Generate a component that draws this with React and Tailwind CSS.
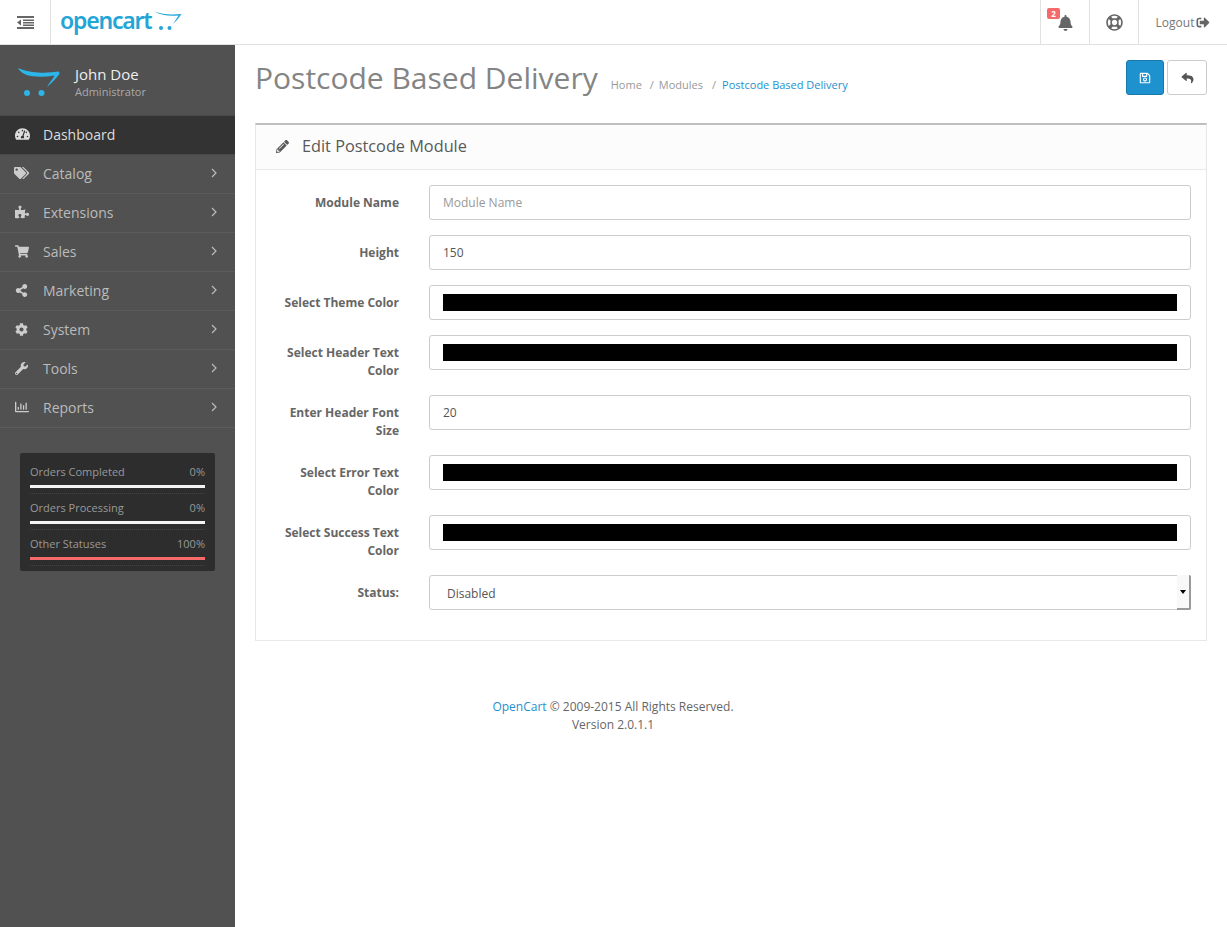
import React from 'react';
import {
  FaTachometerAlt, FaTags, FaPuzzlePiece, FaShoppingCart, FaShareAlt, FaCog, FaWrench,
  FaRegChartBar, FaBell, FaRegLifeRing, FaSignOutAlt, FaRegSave, FaReply, FaPencilAlt,
} from 'react-icons/fa';

const menu = [
  { label: 'Catalog', icon: FaTags, size: 'w-[15px] h-[14px]' },
  { label: 'Extensions', icon: FaPuzzlePiece, size: 'w-[14px] h-[14px]' },
  { label: 'Sales', icon: FaShoppingCart, size: 'w-[14px] h-[13px]' },
  { label: 'Marketing', icon: FaShareAlt, size: 'w-[13px] h-[13px]' },
  { label: 'System', icon: FaCog, size: 'w-[13px] h-[13px]' },
  { label: 'Tools', icon: FaWrench, size: 'w-[13px] h-[13px]' },
  { label: 'Reports', icon: FaRegChartBar, size: 'w-[16px] h-[14px]' },
];

const stats = [
  { label: 'Orders Completed', value: '0%', bar: 'bg-[#f3f3f3]' },
  { label: 'Orders Processing', value: '0%', bar: 'bg-[#f3f3f3]' },
  { label: 'Other Statuses', value: '100%', bar: 'bg-[#f56b6b]' },
];

function CartLogo({ className }) {
  return (
    <svg className={className} viewBox="0 0 42 28" fill="currentColor">
      <path d="M0 0C6 2.500 12 4 20 4.500C27 5 34 4.500 41 3.500L41.500 6C38 10.500 33 16 29 19C31 15 34 12 36.500 7.500C28 9 20 9 13 8C7 7 2 4 0 0z" />
      <circle cx="9" cy="25" r="3" />
      <circle cx="23.500" cy="25" r="3" />
    </svg>
  );
}

function HeaderCart() {
  return (
    <svg className="w-[28px] h-[20px] ml-[3px] -mt-[2px]" viewBox="0 0 28 20" fill="currentColor">
      <path d="M0.500 0.500C8 3.500 17 4 27.500 3C25 7 22 10 19 13C21 10 23 7 24.500 4.500C16 5.500 7 4.500 0.500 0.500z" />
      <circle cx="7" cy="17" r="2" />
      <circle cx="15.500" cy="17" r="2" />
    </svg>
  );
}

function OutdentIcon() {
  return (
    <svg className="w-[17px] h-[13px]" viewBox="0 0 17 13" fill="currentColor">
      <rect x="0" y="0" width="17" height="2" />
      <rect x="6" y="3.500" width="11" height="1.500" />
      <rect x="6" y="6" width="11" height="1.500" />
      <rect x="6" y="8.500" width="11" height="1.500" />
      <rect x="0" y="11" width="17" height="2" />
      <path d="M0 6.500L4 3.500V9.500z" />
    </svg>
  );
}

function ThinChevron() {
  return (
    <svg className="ml-auto mr-[18px] w-[6px] h-[10px]" viewBox="0 0 6 10" fill="none" stroke="currentColor" strokeWidth="1.200">
      <path d="M1 1l4 4-4 4" />
    </svg>
  );
}

function FormRow({ label, children }) {
  return (
    <div className="flex items-start">
      <label className="w-[130px] shrink-0 ml-[4px] mr-[30px] pt-[9px] text-right text-[12px] leading-[18px] font-bold text-[#666]">
        {label}
      </label>
      <div className="flex-1">{children}</div>
    </div>
  );
}

function TextField({ label, value, placeholder }) {
  return (
    <FormRow label={label}>
      <input
        type="text"
        defaultValue={value}
        placeholder={placeholder}
        className="w-full h-[35px] px-[13px] bg-white border border-[#ccc] rounded-[3px] text-[12px] text-[#555] placeholder:text-[#999] outline-none"
      />
    </FormRow>
  );
}

function ColorField({ label }) {
  return (
    <FormRow label={label}>
      <input
        type="color"
        defaultValue="#000000"
        className="block w-full h-[35px] px-[13px] py-[8px] bg-white border border-[#ccc] rounded-[3px] [&::-webkit-color-swatch-wrapper]:p-0 [&::-webkit-color-swatch]:border-0"
      />
    </FormRow>
  );
}

export default function App() {
  return (
    <div className="min-h-[927px] flex flex-col bg-white text-[12px] text-[#666] font-['Open_Sans',sans-serif]">
      {/* Header */}
      <header className="h-[45px] flex items-stretch bg-white border-b border-[#e1e1e1]">
        <div className="w-[51px] flex items-center justify-center border-r border-[#e1e1e1] text-[#666]">
          <OutdentIcon />
        </div>
        <div className="flex items-center pl-[9px] text-[#23a5d8]">
          <span className="text-[23px] leading-none font-semibold font-['Noto_Sans',sans-serif] tracking-[-1.200px] -mt-[4px]">opencart</span>
          <HeaderCart />
        </div>
        <div className="ml-auto flex items-stretch">
          <div className="relative w-[49px] flex items-center justify-center border-l border-[#e1e1e1]">
            <FaBell className="w-[15px] h-[16px] text-[#666] mt-[1px]" />
            <span className="absolute left-[6px] top-[8px] w-[13px] h-[11px] rounded-[2px] bg-[#f56b6b] text-white text-[8px] leading-[11px] font-bold text-center">2</span>
          </div>
          <div className="w-[49px] flex items-center justify-center border-l border-[#e1e1e1]">
            <FaRegLifeRing className="w-[17px] h-[17px] text-[#666]" />
          </div>
          <div className="w-[89px] flex items-center justify-center gap-[2px] pt-[1px] border-l border-[#e1e1e1] text-[#777]">
            <span>Logout</span>
            <FaSignOutAlt className="w-[14px] h-[13px] text-[#666]" />
          </div>
        </div>
      </header>

      <div className="flex flex-1">
        {/* Sidebar */}
        <aside className="w-[235px] shrink-0 bg-[#515151]">
          <div className="h-[71px] flex items-center pl-[18px] border-b border-[#484848]">
            <CartLogo className="w-[42px] h-[28px] text-[#2cb5e8] mt-[4px]" />
            <div className="ml-[15px] mt-[3px]">
              <div className="text-[15px] leading-[20px] text-[#eee]">John Doe</div>
              <div className="mt-[1px] text-[11px] leading-[14px] text-[#aaa]">Administrator</div>
            </div>
          </div>
          <div className="h-[39px] flex items-center pb-[2px] bg-[#333] text-[#ddd] text-[14px] border-b border-[#484848]">
            <span className="w-[43px] flex justify-center pl-[1px]"><FaTachometerAlt className="w-[15px] h-[14px] text-[#ddd]" /></span>
            Dashboard
          </div>
          {menu.map(({ label, icon: Icon, size }) => (
            <div key={label} className="h-[39px] flex items-center pb-[2px] text-[#bbb] text-[14px] border-b border-[#5b5b5b]">
              <span className="w-[43px] flex justify-center"><Icon className={`${size} text-[#ccc]`} /></span>
              {label}
              <ThinChevron />
            </div>
          ))}
          <div className="mt-[25px] mx-[20px] w-[195px] px-[10px] py-[5px] rounded-[2px] bg-[#2d2d2d]">
            {stats.map((s) => (
              <div key={s.label} className="h-[36px] pt-[6px] border-b border-dotted border-[#444] text-[11px] leading-[16px] text-[#999]">
                <div className="flex justify-between">
                  <span>{s.label}</span>
                  <span>{s.value}</span>
                </div>
                <div className={`h-[3px] mt-[5px] ${s.bar}`} />
              </div>
            ))}
          </div>
        </aside>

        {/* Content */}
        <main className="flex-1 min-w-0">
          <div className="h-[78px] flex items-start px-[20px] pt-[15px]">
            <h1 className="text-[30px] leading-[36px] text-[#848484]">Postcode Based Delivery</h1>
            <ul className="flex items-center ml-[13px] mt-[16px] text-[11px] leading-[18px] text-[#999]">
              <li>Home</li>
              <li className="ml-[8px]"><span className="mr-[5px]">/</span>Modules</li>
              <li className="ml-[9px] text-[#1e91cf]"><span className="mr-[6px] text-[#999]">/</span>Postcode Based Delivery</li>
            </ul>
            <div className="ml-auto flex gap-[3px]">
              <button className="w-[38px] h-[35px] flex items-center justify-center rounded-[3px] bg-[#1e91cf] border border-[#1978ab] text-white">
                <FaRegSave className="w-[12px] h-[12px]" />
              </button>
              <button className="w-[40px] h-[35px] flex items-center justify-center rounded-[3px] bg-white border border-[#ccc] text-[#555]">
                <FaReply className="w-[13px] h-[12px]" />
              </button>
            </div>
          </div>

          <section className="mx-[20px] border border-[#e8e8e8] border-t-2 border-t-[#bfbfbf]">
            <div className="h-[45px] flex items-center pl-[20px] pb-[2px] bg-[#fcfcfc] border-b border-[#e8e8e8] text-[16.300px] text-[#595959]">
              <FaPencilAlt className="w-[13px] h-[13px] mr-[13px]" />
              Edit Postcode Module
            </div>
            <div className="pt-[15px] pb-[30px] pl-[9px] pr-[15px] flex flex-col gap-[15px]">
              <TextField label="Module Name" placeholder="Module Name" />
              <TextField label="Height" value="150" />
              <ColorField label="Select Theme Color" />
              <ColorField label="Select Header Text Color" />
              <TextField label="Enter Header Font Size" value="20" />
              <ColorField label="Select Error Text Color" />
              <ColorField label="Select Success Text Color" />
              <FormRow label="Status:">
                <div className="relative">
                  <select className="block w-full h-[35px] pl-[17px] pt-[2px] appearance-none bg-white border border-[#ccc] rounded-[3px] text-[12px] text-[#555] outline-none">
                    <option>Disabled</option>
                    <option>Enabled</option>
                  </select>
                  <span className="absolute right-0 top-0 w-[14px] h-[35px] flex items-center justify-center pointer-events-none bg-[#f8f8f8] border-r-2 border-b-2 border-[#999] rounded-r-[2px]">
                    <span className="border-x-[3px] border-t-[4px] border-x-transparent border-t-black" />
                  </span>
                </div>
              </FormRow>
            </div>
          </section>

          <footer className="mt-[57px] pr-[236px] text-center text-[12px] leading-[18px] text-[#666]">
            <div><span className="text-[#1e91cf]">OpenCart</span> © 2009-2015 All Rights Reserved.</div>
            <div>Version 2.0.1.1</div>
          </footer>
        </main>
      </div>
    </div>
  );
}
